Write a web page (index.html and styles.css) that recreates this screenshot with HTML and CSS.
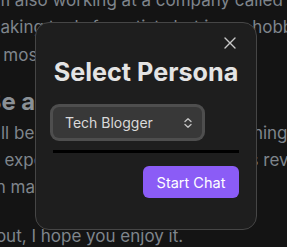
FILE: index.html
```html
<!DOCTYPE html>
<html lang="en">
<head>
<meta charset="utf-8">
<title>Select Persona</title>
<link rel="stylesheet" href="styles.css">
</head>
<body>
<article class="page">
  <p class="para">I'm also working at a company called Lumen<br>making tools for artists but in my hobby time I write<br>is mostly writing.</p>
  <h2 class="heading">Be a builder</h2>
  <p class="para para-2">It'll be a lengthy tale about everything<br>in experiences, and how all of this reveals<br>on many things.</p>
  <p class="para para-3">bout, I hope you enjoy it.</p>
</article>

<div class="modal" role="dialog" aria-labelledby="modal-title">
  <button class="close" aria-label="Close">
    <svg width="12" height="12" viewBox="0 0 12 12" fill="none" stroke="currentColor" stroke-width="1.4" stroke-linecap="round"><path d="M1 1L11 11M11 1L1 11"/></svg>
  </button>
  <h1 class="title" id="modal-title">Select Persona</h1>
  <div class="select">
    <span class="select-label">Tech Blogger</span>
    <svg class="chevron" width="8" height="10" viewBox="0 0 8 10" fill="none" stroke="currentColor" stroke-width="1.3" stroke-linecap="round" stroke-linejoin="round"><path d="M1 3.6L4 0.8L7 3.6M1 6.4L4 9.2L7 6.4"/></svg>
  </div>
  <div class="rule"></div>
  <div class="actions">
    <button class="start">Start Chat</button>
  </div>
</div>
</body>
</html>
```
FILE: styles.css
```css
html, body {
  margin: 0;
  padding: 0;
  background: #141414;
  overflow: hidden;
  height: 100%;
}
body {
  font-family: Inter, "Noto Sans", sans-serif;
}
.page {
  margin-left: -14.5px;
  margin-top: -12.8px;
  color: #7f858c;
  white-space: nowrap;
}
.para {
  margin: 0;
  font-size: 17px;
  line-height: 27.2px;
}
.heading {
  margin: 17.5px 0 1.4px;
  font-size: 24px;
  line-height: 32px;
  font-weight: 700;
  color: #8a9096;
}
.para-3 {
  margin-top: 22px;
}
.modal {
  position: fixed;
  left: 35px;
  top: 22px;
  width: 222px;
  height: 208px;
  box-sizing: border-box;
  padding: 0 17px;
  background: #1e1e1e;
  border: 1px solid #464646;
  border-radius: 14px;
  display: flex;
  flex-direction: column;
}
.close {
  position: absolute;
  top: 14px;
  right: 20px;
  width: 12px;
  height: 12px;
  padding: 0;
  border: 0;
  background: none;
  color: #c8c8c8;
  display: flex;
}
.title {
  margin: 33px -20px 0;
  white-space: nowrap;
  text-align: center;
  font-size: 25.2px;
  line-height: 32px;
  font-weight: 700;
  color: #e4e4e4;
}
.select {
  margin-top: 19px;
  width: 149px;
  height: 31px;
  box-sizing: border-box;
  padding: 0 10px 0 12px;
  background: #383838;
  border-radius: 6px;
  box-shadow: 0 0 0 3px #4e4e4e;
  display: flex;
  align-items: center;
  justify-content: space-between;
  color: #dadada;
  font-size: 14px;
}
.chevron {
  color: #c4c4c4;
}
.rule {
  margin-top: 12px;
  height: 3px;
  background: #000;
}
.actions {
  margin-top: 13px;
  display: flex;
  justify-content: flex-end;
}
.start {
  width: 96px;
  height: 32px;
  border: 0;
  border-radius: 6px;
  background: #8b5cf6;
  color: #fff;
  font-family: Inter, sans-serif;
  font-size: 14.5px;
  padding: 0;
}
```
